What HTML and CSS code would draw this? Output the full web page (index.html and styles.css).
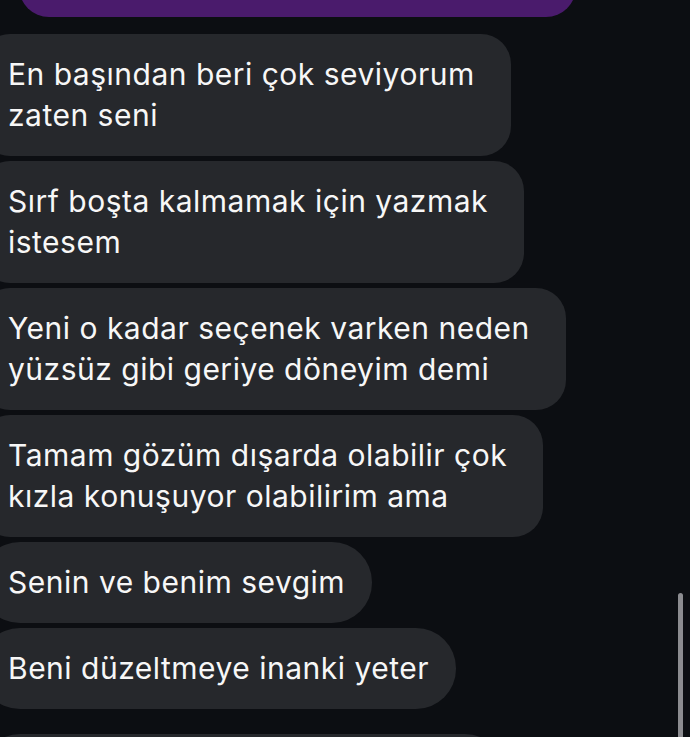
FILE: index.html
```html
<!DOCTYPE html>
<html lang="tr">
<head>
<meta charset="utf-8">
<link rel="stylesheet" href="styles.css">
</head>
<body>
<div class="thread">
  <div class="bubble-own"></div>
  <div class="msg multi">En başından beri çok seviyorum<br>zaten seni</div>
  <div class="msg multi">Sırf boşta kalmamak için yazmak<br>istesem</div>
  <div class="msg multi">Yeni o kadar seçenek varken neden<br>yüzsüz gibi geriye döneyim demi</div>
  <div class="msg multi">Tamam gözüm dışarda olabilir çok<br>kızla konuşuyor olabilirim ama</div>
  <div class="msg">Senin ve benim sevgim</div>
  <div class="msg">Beni düzeltmeye inanki yeter</div>
  <div class="msg next-group"></div>
</div>
<div class="scrollbar"></div>
</body>
</html>
```
FILE: styles.css
```css
html, body {
  margin: 0;
  padding: 0;
  background: #0c0e12;
  overflow: hidden;
  height: 737px;
}
body {
  font-family: Inter, "Noto Sans", sans-serif;
  color: #f7f7f7;
  position: relative;
}
.thread {
  display: flex;
  flex-direction: column;
  align-items: flex-start;
  gap: 5px;
}
.bubble-own {
  margin-top: -43px;
  margin-left: 19px;
  margin-bottom: 12px;
  width: 557px;
  height: 60px;
  border-radius: 30px;
  background: #4a1b6c;
}
.msg {
  margin-left: -20px;
  padding: 20px 27px 20px 28px;
  background: #26282c;
  border-radius: 40px;
  font-size: 30px;
  letter-spacing: 0.5px;
  line-height: 41px;
  white-space: nowrap;
}
.msg.multi {
  border-radius: 30px;
  padding-right: 36px;
}
.msg.next-group {
  margin-top: 20px;
  width: 470px;
  height: 41px;
}
.scrollbar {
  position: absolute;
  left: 678px;
  top: 593px;
  width: 5px;
  height: 160px;
  border-radius: 3px;
  background: #8c8c90;
}
```
